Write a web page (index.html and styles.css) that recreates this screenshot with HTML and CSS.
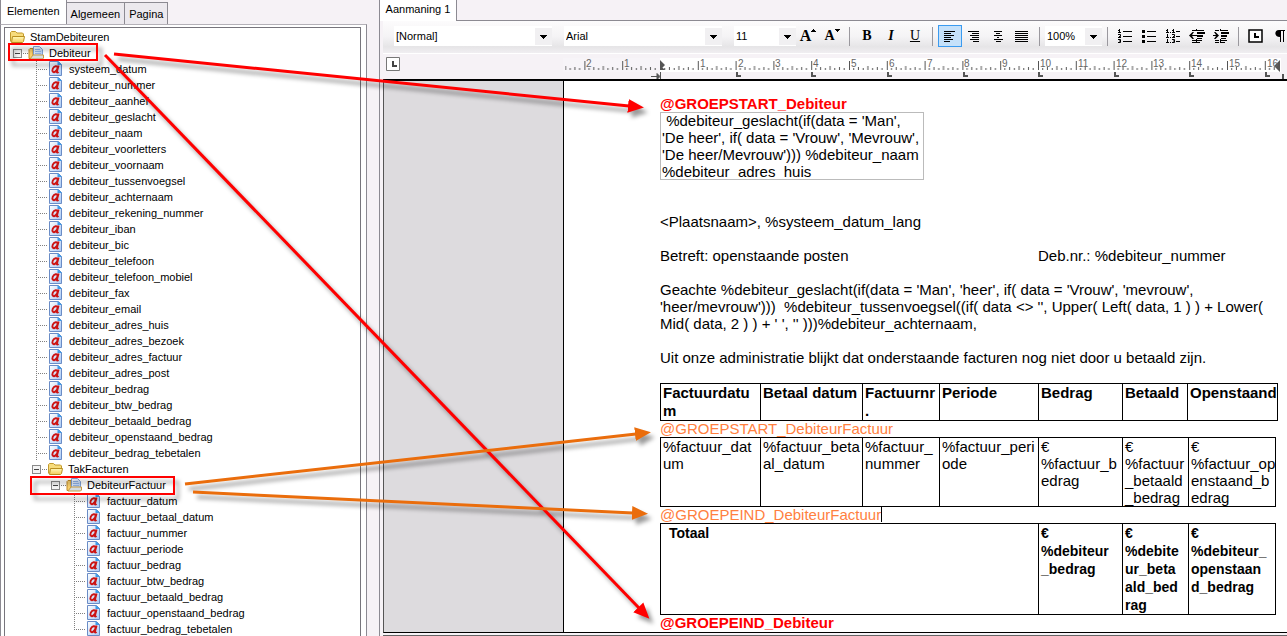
FILE: index.html
```html
<!DOCTYPE html>
<html lang="nl">
<head>
<meta charset="utf-8">
<title>Aanmaning 1</title>
<link rel="stylesheet" href="styles.css">
</head>
<body>
<svg class="defs" aria-hidden="true">
  <defs>
    <linearGradient id="gold" x1="0" y1="0" x2="0" y2="1"><stop offset="0" stop-color="#fff9b8"/><stop offset="1" stop-color="#f3cb58"/></linearGradient>
    <linearGradient id="sheet" x1="0" y1="0" x2="1" y2="1"><stop offset="0" stop-color="#ffffff"/><stop offset="1" stop-color="#a9c9f5"/></linearGradient>
    <symbol id="folder" viewBox="0 0 17 16">
      <path d="M1.500 12.500V3.500l1-1h4l1.500 1.500h5.500l1 1v3" fill="#f7dc7c" stroke="#c39a2c"/>
      <path d="M2.500 13.500l1-6h12l-1 5-1 1z" fill="url(#gold)" stroke="#b98f1f"/>
    </symbol>
    <symbol id="group" viewBox="0 0 17 16">
      <path d="M1 13.500v-9l1-1h3v10z" fill="#f8cf6c" stroke="#c08a28"/>
      <path d="M5.500 10.500V1.500h6l3 3v6z" fill="url(#sheet)" stroke="#7d9fd4"/>
      <path d="M7 4.500h5M7 6.500h6M7 8.500h6" stroke="#8fb2e6"/>
      <path d="M2 14l3-4h10.500v3l-1 1z" fill="#d4dde2" stroke="#c79a3e"/>
    </symbol>
    <symbol id="field" viewBox="0 0 16 16">
      <path d="M.5.500h9l3 3v11H.5z" fill="url(#sheet)" stroke="#6a8cc6"/>
      <path d="M8.500 0v4H13z" fill="#3c9be8"/>
      <path d="M9.600 4.500l-1.700 6.300c-.2 1.100.7 1 1.600.1M8.800 6.500C8.200 4.600 5.200 4.600 3.800 7.600c-1.300 3 .8 4.600 2.800 2.700 1.100-1 1.800-2.300 2.200-3.800" fill="none" stroke="#cc1414" stroke-width="1.900"/>
    </symbol>
    <symbol id="down" viewBox="0 0 17 17"><path d="M5 7h7v1h-1v1h-1v1H9v1H8v-1H7V9H6V8H5z"/></symbol>
  </defs>
</svg>

<main class="app">
  <section class="side">
    <nav class="tabs">
      <button class="tab active">Elementen</button><button class="tab">Algemeen</button><button class="tab">Pagina</button>
    </nav>
    <div class="side-body">
      <div class="tree">
        <div class="row root"><svg class="ico"><use href="#folder"/></svg><span>StamDebiteuren</span></div>
        <div class="row l1"><button class="exp" aria-label="Debiteur inklappen"></button><i class="stub"></i><svg class="ico"><use href="#group"/></svg><span>Debiteur</span></div>
        <ul class="leaves l2">
          <li class="row"><svg class="ico"><use href="#field"/></svg><span>systeem_datum</span></li>
          <li class="row"><svg class="ico"><use href="#field"/></svg><span>debiteur_nummer</span></li>
          <li class="row"><svg class="ico"><use href="#field"/></svg><span>debiteur_aanhef</span></li>
          <li class="row"><svg class="ico"><use href="#field"/></svg><span>debiteur_geslacht</span></li>
          <li class="row"><svg class="ico"><use href="#field"/></svg><span>debiteur_naam</span></li>
          <li class="row"><svg class="ico"><use href="#field"/></svg><span>debiteur_voorletters</span></li>
          <li class="row"><svg class="ico"><use href="#field"/></svg><span>debiteur_voornaam</span></li>
          <li class="row"><svg class="ico"><use href="#field"/></svg><span>debiteur_tussenvoegsel</span></li>
          <li class="row"><svg class="ico"><use href="#field"/></svg><span>debiteur_achternaam</span></li>
          <li class="row"><svg class="ico"><use href="#field"/></svg><span>debiteur_rekening_nummer</span></li>
          <li class="row"><svg class="ico"><use href="#field"/></svg><span>debiteur_iban</span></li>
          <li class="row"><svg class="ico"><use href="#field"/></svg><span>debiteur_bic</span></li>
          <li class="row"><svg class="ico"><use href="#field"/></svg><span>debiteur_telefoon</span></li>
          <li class="row"><svg class="ico"><use href="#field"/></svg><span>debiteur_telefoon_mobiel</span></li>
          <li class="row"><svg class="ico"><use href="#field"/></svg><span>debiteur_fax</span></li>
          <li class="row"><svg class="ico"><use href="#field"/></svg><span>debiteur_email</span></li>
          <li class="row"><svg class="ico"><use href="#field"/></svg><span>debiteur_adres_huis</span></li>
          <li class="row"><svg class="ico"><use href="#field"/></svg><span>debiteur_adres_bezoek</span></li>
          <li class="row"><svg class="ico"><use href="#field"/></svg><span>debiteur_adres_factuur</span></li>
          <li class="row"><svg class="ico"><use href="#field"/></svg><span>debiteur_adres_post</span></li>
          <li class="row"><svg class="ico"><use href="#field"/></svg><span>debiteur_bedrag</span></li>
          <li class="row"><svg class="ico"><use href="#field"/></svg><span>debiteur_btw_bedrag</span></li>
          <li class="row"><svg class="ico"><use href="#field"/></svg><span>debiteur_betaald_bedrag</span></li>
          <li class="row"><svg class="ico"><use href="#field"/></svg><span>debiteur_openstaand_bedrag</span></li>
          <li class="row"><svg class="ico"><use href="#field"/></svg><span>debiteur_bedrag_tebetalen</span></li>
        </ul>
        <div class="row l2row"><button class="exp" aria-label="TakFacturen inklappen"></button><i class="stub"></i><svg class="ico"><use href="#folder"/></svg><span>TakFacturen</span></div>
        <div class="row l3row"><button class="exp" aria-label="DebiteurFactuur inklappen"></button><i class="stub"></i><svg class="ico"><use href="#group"/></svg><span>DebiteurFactuur</span></div>
        <ul class="leaves l4">
          <li class="row"><svg class="ico"><use href="#field"/></svg><span>factuur_datum</span></li>
          <li class="row"><svg class="ico"><use href="#field"/></svg><span>factuur_betaal_datum</span></li>
          <li class="row"><svg class="ico"><use href="#field"/></svg><span>factuur_nummer</span></li>
          <li class="row"><svg class="ico"><use href="#field"/></svg><span>factuur_periode</span></li>
          <li class="row"><svg class="ico"><use href="#field"/></svg><span>factuur_bedrag</span></li>
          <li class="row"><svg class="ico"><use href="#field"/></svg><span>factuur_btw_bedrag</span></li>
          <li class="row"><svg class="ico"><use href="#field"/></svg><span>factuur_betaald_bedrag</span></li>
          <li class="row"><svg class="ico"><use href="#field"/></svg><span>factuur_openstaand_bedrag</span></li>
          <li class="row last"><svg class="ico"><use href="#field"/></svg><span>factuur_bedrag_tebetalen</span></li>
        </ul>
      </div>
    </div>
  </section>

  <section class="editor">
    <nav class="doc-tabs"><button class="doc-tab">Aanmaning 1</button></nav>
    <div class="toolbar">
      <label class="combo style"><select aria-label="Stijl"><option>[Normal]</option></select><svg class="drop"><use href="#down"/></svg></label>
      <label class="combo font"><select aria-label="Lettertype"><option>Arial</option></select><svg class="drop"><use href="#down"/></svg></label>
      <label class="combo size"><select aria-label="Grootte"><option>11</option></select><svg class="drop"><use href="#down"/></svg></label>
      <button class="tool serif grow" aria-label="Groter">A<svg viewBox="0 0 5 3"><path d="M2 0h1v1h1v1h1v1H0V2h1V1h1z"/></svg></button>
      <button class="tool serif shrink" aria-label="Kleiner">A<svg viewBox="0 0 5 3"><path d="M0 0h5v1H4v1H3v1H2V2H1V1H0z"/></svg></button>
      <i class="sep"></i>
      <button class="tool serif bold">B</button>
      <button class="tool serif italic">I</button>
      <button class="tool serif under">U</button>
      <i class="sep"></i>
      <button class="tool on" aria-label="Links uitlijnen"><svg class="glyph" viewBox="0 0 16 16"><path d="M2 3.500h11M2 5.500h7M2 7.500h10M2 9.500h7M2 11.500h9M2 13.500h6" stroke="#000"/></svg></button>
      <button class="tool" aria-label="Rechts uitlijnen"><svg class="glyph" viewBox="0 0 16 16"><path d="M2 3.500h11M6 5.500h7M4 7.500h9M6 9.500h7M4 11.500h9M7 13.500h6" stroke="#000"/></svg></button>
      <button class="tool" aria-label="Centreren"><svg class="glyph" viewBox="0 0 16 16"><path d="M4 3.500h8M6 5.500h4M4 7.500h8M7 9.500h2M4 11.500h9M6 13.500h5" stroke="#000"/></svg></button>
      <button class="tool" aria-label="Uitvullen"><svg class="glyph" viewBox="0 0 16 16"><path d="M1 3.500h13M1 5.500h13M1 7.500h13M1 9.500h13M1 11.500h13M1 13.500h13" stroke="#000"/></svg></button>
      <i class="sep"></i>
      <label class="combo zoom"><select aria-label="Zoom"><option>100%</option></select><svg class="drop"><use href="#down"/></svg></label>
      <i class="sep"></i>
      <button class="tool" aria-label="Nummering"><svg class="glyph" viewBox="0 0 16 16"><path d="M6 3.500h9M6 8.500h9M6 13.500h9M1 2.500h2M2.500 1v4M1 4.500h3M1 6.500h2.500v2H2M1 9.500h3M1 11.500h2.500v3H1M2 13h1" stroke="#000" fill="none"/></svg></button>
      <button class="tool" aria-label="Opsomming"><svg class="glyph" viewBox="0 0 16 16"><path d="M6 3.500h9M6 8.500h9M6 13.500h9" stroke="#000"/><path d="M1 2h3v3H1zM1 7h3v3H1zM1 12h3v3H1z"/></svg></button>
      <button class="tool" aria-label="Lijst met niveaus"><svg class="glyph" viewBox="0 0 16 16"><path d="M11 3.500h4M11 8.500h4M11 13.500h4M1 2.500h2M2.500 1v4M1 4.500h3M5 4.500h1M7 2.500h2M8.500 1v4M7 4.500h3M2.500 6v4M1 9.500h3M5 9.500h1M7 6.500h2.500v2H8M7 9.500h3M2.500 11v4M1 14.500h3M5 14.500h1M7 11.500h2.500v3H7M8 13h1" stroke="#000" fill="none"/></svg></button>
      <button class="tool" aria-label="Inspringing verkleinen"><svg class="glyph" viewBox="0 0 16 16"><path d="M3 2.500h4M8 2.500h7M8 12.500h5M3 12.500h4M3 14.500h4M8 14.500h3M7.500 1v2M7.500 11v4M8 10.500h5M6 7.500h2" stroke="#000"/><path d="M8 4h8v2H8zM8 7h6v2H8zM0 7.500L3.500 4H5L3 7h3v1H3l2 3H3.500z"/></svg></button>
      <button class="tool" aria-label="Inspringing vergroten"><svg class="glyph" viewBox="0 0 16 16"><path d="M2 2.500h4M8 2.500h7M8 12.500h6M2 12.500h4M2 14.500h4M8 14.500h4M7.500 1v2M7.500 11v4M8 10.500h5" stroke="#000"/><path d="M8 4h8v2H8zM8 7h6v2H8zM6 7.500L2.500 4H1l2 3H0v1h3l-2 3h1.500z"/></svg></button>
      <i class="sep"></i>
      <button class="tool" aria-label="Tabstops"><svg class="glyph" viewBox="0 0 16 16"><path d="M1 2h13v12H1z" fill="#fff" stroke="#000" stroke-width="1.500"/><path d="M6 5h2v3h3v2H6z"/></svg></button>
      <button class="tool" aria-label="Alineatekens"><svg class="glyph" viewBox="0 0 16 16"><path d="M7 2h6v1h-1v11h-1V3H9v11H8V9C2 9 2 2 7 2z"/></svg></button>
    </div>

    <div class="ruler">
      <svg class="tabkind" viewBox="0 0 14 14"><path d="M.5.500h13v13H.5z" fill="#fff" stroke="#777"/><path d="M6 4h2v4h3v2H6z" fill="#444"/></svg>
      <svg class="scale" role="img" aria-label="Liniaal">
        <defs><pattern id="cm" width="37.800" height="26" patternUnits="userSpaceOnUse" patternTransform="translate(97 0)">
          <path d="M.5 7v9M4.700 14v2M9.400 13v3M14.200 14v2M18.900 12v4M23.600 14v2M28.300 13v3M33 14v2" stroke="#555"/></pattern></defs>
        <rect y="4" width="97" height="14" fill="#f7f4f8"/><rect x="97" y="4" width="621" height="14" fill="#fff"/>
        <rect x="2" y="4" width="714" height="14" fill="url(#cm)"/>
        <path d="M97 6l5 5-5 5zM97 11l5 5h-5zM717 6l-6 6 6 6z" fill="#555"/>
        <path d="M88 22.500h6M94 19.500l3 3-3 3zM97.500 18v8" stroke="#555" fill="#555"/>
        <g fill="none" stroke="#555" stroke-width="2"><path d="M174 18v4h4M249 18v4h4M325 18v4h4M401 18v4h4M476 18v4h4M552 18v4h4M627 18v4h4M703 18v4h4M720 20v5"/></g>
        <g class="nums"><text x="23" y="13">2</text><text x="61" y="13">1</text><text x="137" y="13">1</text><text x="175" y="13">2</text><text x="212" y="13">3</text><text x="250" y="13">4</text><text x="288" y="13">5</text><text x="326" y="13">6</text><text x="364" y="13">7</text><text x="401" y="13">8</text><text x="439" y="13">9</text><text x="477" y="13">10</text><text x="515" y="13">11</text><text x="553" y="13">12</text><text x="590" y="13">13</text><text x="628" y="13">14</text><text x="666" y="13">15</text><text x="704" y="13">16</text></g>
      </svg>
    </div>

    <div class="canvas">
      <article class="page">
        <h1 class="mark">@GROEPSTART_Debiteur</h1>
        <div class="address">&nbsp;%debiteur_geslacht(if(data = 'Man',<br>'De heer', if( data = 'Vrouw', 'Mevrouw',<br>'De heer/Mevrouw'))) %debiteur_naam<br>%debiteur_adres_huis</div>
        <p class="place">&lt;Plaatsnaam&gt;, %systeem_datum_lang</p>
        <p class="ref"><span>Betreft: openstaande posten</span><span>Deb.nr.: %debiteur_nummer</span></p>
        <p>Geachte %debiteur_geslacht(if(data = 'Man', 'heer', if( data = 'Vrouw', 'mevrouw',<br>'heer/mevrouw')))&nbsp; %debiteur_tussenvoegsel((if( data &lt;&gt; '', Upper( Left( data, 1 ) ) + Lower(<br>Mid( data, 2 ) ) + ' ', '' )))%debiteur_achternaam,</p>
        <p>Uit onze administratie blijkt dat onderstaande facturen nog niet door u betaald zijn.</p>
        <table class="head">
          <colgroup><col class="c1"><col class="c2"><col class="c3"><col class="c4"><col class="c5"><col class="c6"><col class="c7"></colgroup>
          <tr><th>Factuurdatu<br>m</th><th>Betaal datum</th><th>Factuurnr<br>.</th><th>Periode</th><th>Bedrag</th><th>Betaald</th><th>Openstaand</th></tr>
        </table>
        <div class="sub">@GROEPSTART_DebiteurFactuur</div>
        <table>
          <colgroup><col class="c1"><col class="c2"><col class="c3"><col class="c4"><col class="c5"><col class="c6"><col class="c7"></colgroup>
          <tr><td>%factuur_dat<br>um</td><td>%factuur_beta<br>al_datum</td><td>%factuur_<br>nummer</td><td>%factuur_peri<br>ode</td><td>€<br>%factuur_b<br>edrag</td><td>€<br>%factuur<br>_betaald<br>_bedrag</td><td>€<br>%factuur_op<br>enstaand_b<br>edrag</td></tr>
        </table>
        <div class="sub caret">@GROEPEIND_DebiteurFactuur</div>
        <table>
          <colgroup><col class="c1"><col class="c2"><col class="c3"><col class="c4"><col class="c5"><col class="c6"><col class="c7"></colgroup>
          <tr><th class="total" colspan="4">Totaal</th><th>€<br>%debiteur<br>_bedrag</th><th>€<br>%debite<br>ur_beta<br>ald_bed<br>rag</th><th>€<br>%debiteur_<br>openstaan<br>d_bedrag</th></tr>
        </table>
        <div class="mark end">@GROEPEIND_Debiteur</div>
      </article>
    </div>
  </section>
</main>

<svg class="notes" aria-hidden="true">
  <defs>
    <marker id="hr" markerUnits="userSpaceOnUse" markerWidth="16" markerHeight="16" refX="1" refY="8" orient="auto"><path d="M0 1l16 7-16 7z" fill="#f00"/></marker>
    <marker id="ho" markerUnits="userSpaceOnUse" markerWidth="16" markerHeight="16" refX="1" refY="8" orient="auto"><path d="M0 1l16 7-16 7z" fill="#ea6d0c"/></marker>
  </defs>
  <g fill="none">
    <g stroke="#f00" stroke-width="2"><path d="M9 44h88v16H9zM31 477h143v17H31z"/></g>
    <g stroke="#f00" stroke-width="3"><path d="M114 54L629 106" marker-end="url(#hr)"/><path d="M105 55L639 608" marker-end="url(#hr)"/></g>
    <g stroke="#ea6d0c" stroke-width="3"><path d="M185 484L636 434" marker-end="url(#ho)"/><path d="M193 492L633 513" marker-end="url(#ho)"/></g>
  </g>
</svg>
</body>
</html>
```
FILE: styles.css
```css
* { box-sizing: border-box; }
body {
  margin: 0;
  background: #f6f2f6;
  color: #000;
  font: 11px/16px "Liberation Sans", Arial, sans-serif;
  overflow: hidden;
}
button, select { font: inherit; color: inherit; margin: 0; border: 0; border-radius: 0; background: none; }
i { font-style: normal; }
p, h1, ul { margin: 0; padding: 0; }
.defs { display: block; width: 0; height: 0; }
.app { display: flex; height: 100vh; }

/* Element tree */
.side { flex: 0 0 367px; display: flex; flex-direction: column; }
.tabs { display: flex; align-items: flex-end; height: 24px; flex: none; }
.tab { height: 22px; padding: 0 4px; border: 1px solid #8c8a92; border-left: 0; border-bottom: 0; background: #ece9ee; }
.tab.active { height: 24px; padding: 0 6px 2px; border-left: 1px solid #8c8a92; border-top: 0; background: #fff; }
.side-body { flex: 1; min-height: 0; padding: 2px 5px 0 3px; border: 1px solid #8c8a92; border-top: 1px solid #b4b1b8; border-bottom: 0; background: #fff; }
.tree { height: 100%; padding-top: 1px; border: 1px solid #77757c; border-bottom: 0; overflow: hidden; }
.row { display: flex; align-items: center; height: 16px; white-space: nowrap; list-style: none; }
.ico { width: 17px; height: 16px; flex: none; margin-right: 4px; }
.leaves .ico { width: 16px; }
.root { padding-left: 4px; }
.l1 { padding-left: 8px; }
.l2row { padding-left: 27px; }
.l3row { padding-left: 46px; }
.l2 { padding-left: 31px; }
.l4 { padding-left: 69px; }
.exp { width: 9px; height: 9px; padding: 0; flex: none; border: 1px solid #8a8a8a; background: linear-gradient(#444, #444) center / 5px 1px no-repeat #f4f4f4; }
.stub { width: 6px; height: 1px; flex: none; background: repeating-linear-gradient(90deg, transparent 0 1px, #808080 1px 2px); }
.leaves .row::before {
  content: "";
  width: 13px;
  height: 16px;
  background:
    repeating-linear-gradient(#808080 0 1px, transparent 1px 2px) 0 0 / 1px 100% no-repeat,
    repeating-linear-gradient(90deg, #808080 0 1px, transparent 1px 2px) 0 8px / 11px 1px no-repeat;
}
.leaves .last::before { background-size: 1px 8px, 11px 1px; }

/* Editor */
.editor { flex: 1; min-width: 0; margin-left: 12px; border-left: 1px solid #8c8a92; display: flex; flex-direction: column; }
.editor::after { content: ""; height: 1px; flex: none; margin-left: 3px; background: #666; }
.doc-tabs { display: flex; height: 21px; flex: none; }
.doc-tabs::after { content: ""; flex: 1; border-bottom: 1px solid #8c8a92; }
.doc-tab { width: 77px; padding: 0 0 4px; border-right: 1px solid #8c8a92; background: #fff; }
.toolbar { display: flex; align-items: center; flex: none; height: 32px; margin-left: 3px; padding: 0 0 2px 11px; background: linear-gradient(#fcfbfc 0, #f4f3f5 50%, #e6e5e7 80%, #f0eef1 100%); overflow: hidden; }
.combo { display: flex; align-items: center; height: 20px; flex: none; background: #fff; }
.combo select { flex: 1; min-width: 0; height: 18px; padding: 0 0 0 2px; appearance: none; }
.drop { width: 17px; height: 17px; flex: none; background: #f1f0f2; pointer-events: none; }
.style, .font { width: 158px; margin-right: 12px; }
.size { width: 62px; }
.zoom { width: 57px; }
.sep { width: 1px; height: 19px; flex: none; margin: 0 5px; background: #9a989e; }
.tool { display: flex; align-items: center; justify-content: center; width: 24px; height: 22px; flex: none; padding: 0; }
.tool.on { border: 1px solid #3b9bf0; background: #c5e1fa; }
.glyph { width: 16px; height: 16px; flex: none; }
.serif { font: bold 14px/20px "Liberation Serif", serif; }
.grow { font-size: 16px; }
.grow svg, .shrink svg { width: 5px; height: 3px; align-self: flex-start; margin-top: 4px; }
.italic { font-style: italic; }
.under { text-decoration: underline; font-weight: normal; }

.ruler { display: flex; flex: none; height: 26px; margin-left: 3px; padding-left: 3px; border-top: 1px solid #fff; }
.tabkind { width: 14px; height: 14px; flex: none; margin: 3px 163px 0 0; }
.scale { flex: 1; min-width: 0; height: 26px; overflow: hidden; }
.nums { font-size: 10px; fill: #666; }

.canvas { flex: 1; min-height: 0; display: flex; margin: 0 0 2px 3px; padding-left: 1px; border: solid #000; border-width: 2px 0 1px 1px; border-left-color: #555; background: #dddbde; overflow: hidden; }
.page { flex: 1; min-width: 0; margin-left: 178px; padding: 14px 0 0 96px; border-left: 1px solid #000; background: #fff; font-size: 15px; line-height: 17px; white-space: nowrap; }
.mark { font-size: 15px; font-weight: bold; color: #f00; }
.address { width: 264px; padding-left: 2px; outline: 1px solid #bbb; outline-offset: -1px; }
.page p { margin-bottom: 17px; }
.page .place { margin-top: 33px; }
.ref { display: flex; }
.ref span:first-child { width: 378px; }
table { width: 616px; border-collapse: collapse; table-layout: fixed; }
.c1 { width: 100px; }
.c2 { width: 102px; }
.c3 { width: 77px; }
.c4 { width: 99px; }
.c5 { width: 84px; }
.c6 { width: 66px; }
.c7 { width: 87px; }
.head { width: 618px; }
.head .c6 { width: 65px; }
.head .c7 { width: 90px; }
.head th { font-size: 15px; }
th, td { padding: 0 0 0 2px; border: 1px solid #000; text-align: left; vertical-align: top; }
th { line-height: 18px; font-size: 14px; }
.total { padding-left: 8px; }
.sub, .end { line-height: 16px; color: #ff8040; }
.end { color: #f00; }
.caret::after { content: ""; display: inline-block; width: 1px; height: 15px; background: #000; vertical-align: top; }

/* Call-outs over the window */
.notes { position: absolute; inset: 0; width: 100%; height: 100%; pointer-events: none; filter: drop-shadow(4px 5px 2px rgba(0, 0, 0, .4)); }
```
